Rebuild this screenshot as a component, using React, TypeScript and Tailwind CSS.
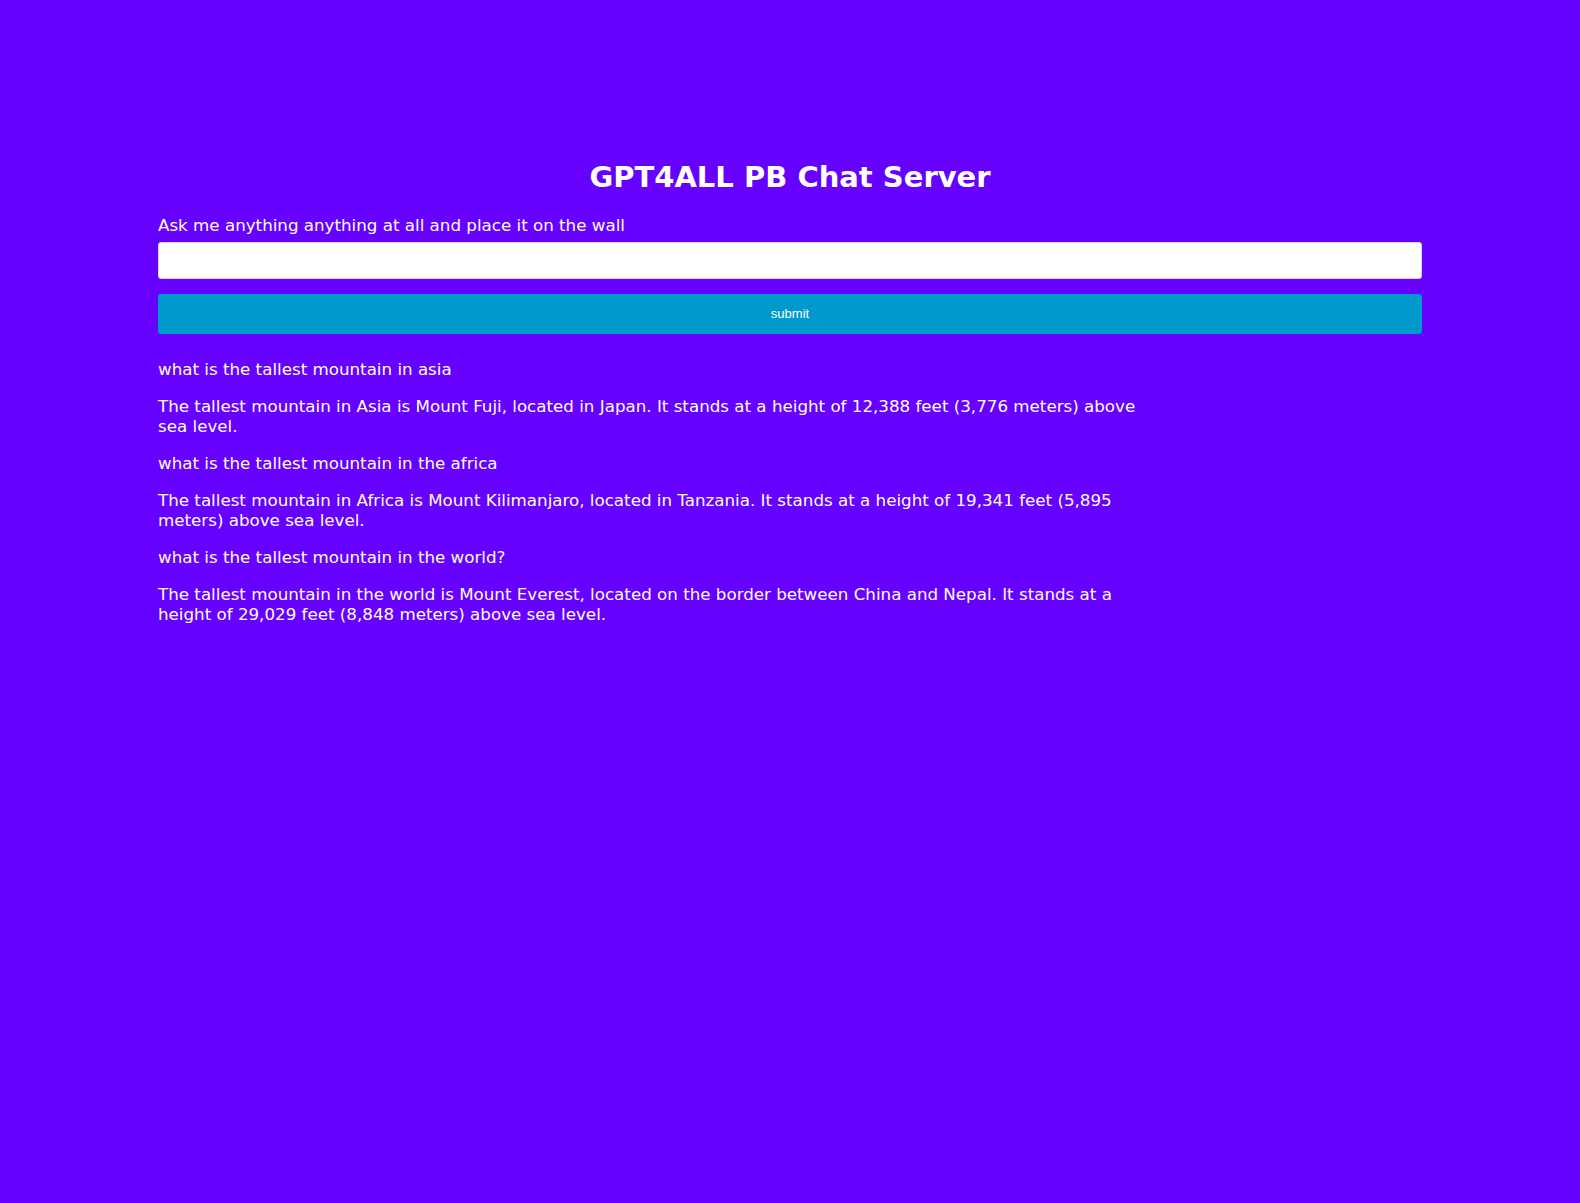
import { useState, FormEvent } from "react";

const messages = [
  "what is the tallest mountain in asia",
  "The tallest mountain in Asia is Mount Fuji, located in Japan. It stands at a height of 12,388 feet (3,776 meters) above sea level.",
  "what is the tallest mountain in the africa",
  "The tallest mountain in Africa is Mount Kilimanjaro, located in Tanzania. It stands at a height of 19,341 feet (5,895 meters) above sea level.",
  "what is the tallest mountain in the world?",
  "The tallest mountain in the world is Mount Everest, located on the border between China and Nepal. It stands at a height of 29,029 feet (8,848 meters) above sea level.",
];

export default function App() {
  const [question, setQuestion] = useState('')

  function handleSubmit(event: FormEvent) {
    event.preventDefault()
  }

  return (
    <div className="min-h-screen bg-[#6600ff] text-white font-['DejaVu_Sans',Verdana,sans-serif]">
      <div className="w-[80%] mx-auto pt-[159px]">
        <h1 className="text-center text-[29px] leading-[36px] font-bold">GPT4ALL PB Chat Server</h1>

        <form onSubmit={handleSubmit} className="flex flex-col mt-[20px]">
          <label className="text-[16.7px] leading-[20px]">Ask me anything anything at all and place it on the wall</label>
          <input type="text"
            value={question}
            onChange={event => setQuestion(event.target.value)}
            className="mt-[7px] h-[37px] bg-white rounded-[3px] border border-[#e0d0f0] px-2 text-black" />
          <button
            type="submit"
            className="mt-[15px] h-[40px] bg-[#0099cc] rounded-[3px] text-[13px] font-['Liberation_Sans',Arial,sans-serif]">submit</button>
        </form>

        <div className="mt-[25px] max-w-[1000px] flex flex-col gap-[17px]">
          {messages.map((m, i) => (
            <p key={i} className="text-[16.7px] leading-[20px]">{m}</p>
          ))}
        </div>
      </div>
    </div>
  )
}
